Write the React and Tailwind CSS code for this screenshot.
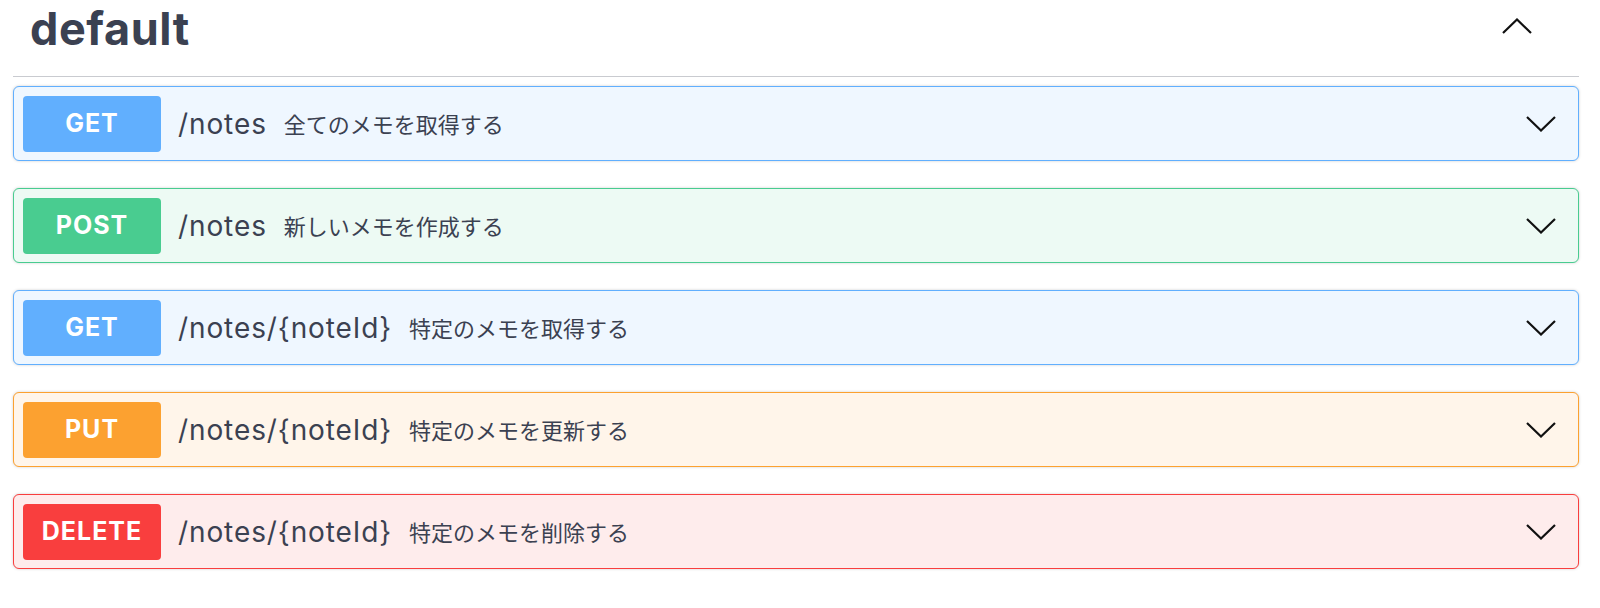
const ops = [
  { method: 'GET', path: '/notes', desc: '全てのメモを取得する', badge: 'bg-[#61affe]', card: 'bg-[#eff7ff] border-[#61affe]' },
  { method: 'POST', path: '/notes', desc: '新しいメモを作成する', badge: 'bg-[#49cc90]', card: 'bg-[#edfaf4] border-[#49cc90]' },
  { method: 'GET', path: '/notes/{noteId}', desc: '特定のメモを取得する', badge: 'bg-[#61affe]', card: 'bg-[#eff7ff] border-[#61affe]' },
  { method: 'PUT', path: '/notes/{noteId}', desc: '特定のメモを更新する', badge: 'bg-[#fca130]', card: 'bg-[#fff5ea] border-[#fca130]' },
  { method: 'DELETE', path: '/notes/{noteId}', desc: '特定のメモを削除する', badge: 'bg-[#f93e3e]', card: 'bg-[#feecec] border-[#f93e3e]' },
]

function Chevron({ up }) {
  return (
    <svg width="30" height="16" viewBox="0 0 30 16" fill="none" stroke="#111" strokeWidth="2.2">
      {up ? <polyline points="1,15 15,1.5 29,15" /> : <polyline points="1,1 15,14.5 29,1" />}
    </svg>
  )
}

function Operation({ op }) {
  return (
    <div className={`flex items-center h-[75px] border rounded-[6px] shadow-[0_0_3px_rgba(0,0,0,0.19)] pl-[9px] pr-[22px] ${op.card}`}>
      <div className={`w-[138px] h-[56px] rounded-[4px] flex items-center justify-center text-white font-bold text-[25px] tracking-[1px] ${op.badge}`}>
        {op.method}
      </div>
      <span className="ml-[17px] text-[28px] tracking-[0.9px] text-[#3b4151]">{op.path}</span>
      <span className="ml-[17px] text-[22px] text-[#3b4151] font-['Noto_Sans_CJK_JP',sans-serif]">{op.desc}</span>
      <div className="ml-auto">
        <Chevron />
      </div>
    </div>
  )
}

export default function App() {
  return (
    <div className="min-h-screen bg-white font-['Inter','Noto_Sans_CJK_JP',sans-serif]">
      <div className="ml-[13px] w-[1566px]">
        <div className="border-b border-[#c9cbd0] pb-[24px]">
          <div className="flex items-center justify-between h-[52px] pl-[17px] pr-[47px]">
            <h3 className="text-[45px] font-bold text-[#3b4151] leading-none tracking-[0.6px] mt-[5px]">default</h3>
            <Chevron up />
          </div>
        </div>
        <div className="flex flex-col gap-[27px] pt-[9px]">
          {ops.map((op, i) => (
            <Operation key={i} op={op} />
          ))}
        </div>
      </div>
    </div>
  )
}
